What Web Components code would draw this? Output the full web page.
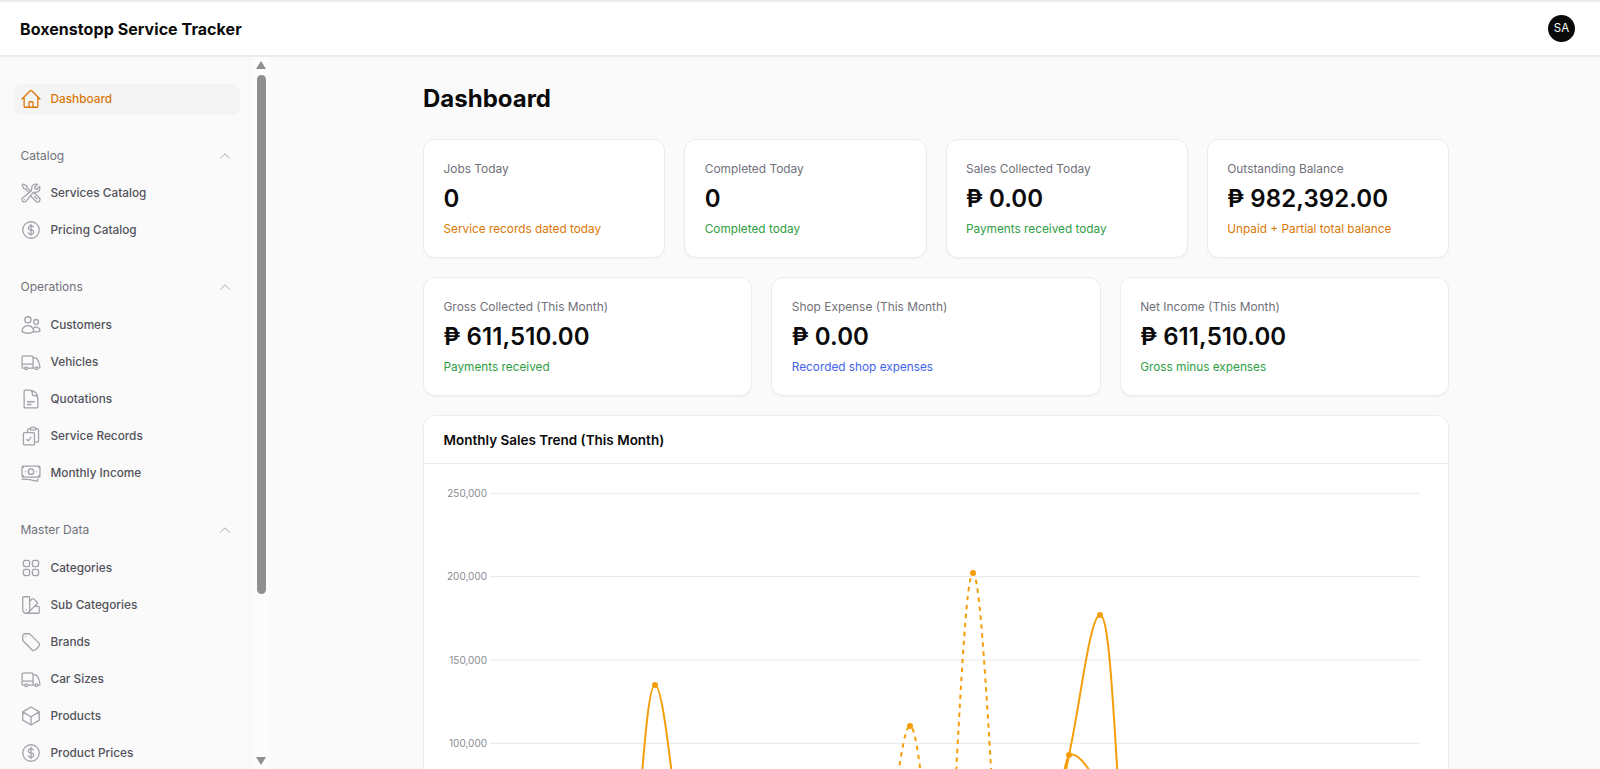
<!DOCTYPE html>
<html lang="en">
<head>
<meta charset="utf-8">
<title>Boxenstopp Service Tracker</title>
<style>
html,body{margin:0;height:100%;overflow:hidden;background:#fafafa;font-family:Inter,"Liberation Sans",sans-serif;}
</style>
</head>
<body>
<app-shell>
  <app-header slot="header" title="Boxenstopp Service Tracker" initials="SA"></app-header>
  <side-nav slot="side">
    <nav-item icon="home" active>Dashboard</nav-item>
    <nav-section label="Catalog">
      <nav-item icon="tools">Services Catalog</nav-item>
      <nav-item icon="dollar">Pricing Catalog</nav-item>
    </nav-section>
    <nav-section label="Operations">
      <nav-item icon="users">Customers</nav-item>
      <nav-item icon="truck">Vehicles</nav-item>
      <nav-item icon="doc">Quotations</nav-item>
      <nav-item icon="clip">Service Records</nav-item>
      <nav-item icon="bank">Monthly Income</nav-item>
    </nav-section>
    <nav-section label="Master Data">
      <nav-item icon="grid">Categories</nav-item>
      <nav-item icon="swatch">Sub Categories</nav-item>
      <nav-item icon="tag">Brands</nav-item>
      <nav-item icon="truck">Car Sizes</nav-item>
      <nav-item icon="cube">Products</nav-item>
      <nav-item icon="dollar">Product Prices</nav-item>
    </nav-section>
  </side-nav>
  <dash-page heading="Dashboard">
    <stat-row columns="4">
      <stat-card label="Jobs Today" value="0" note="Service records dated today" tone="orange"></stat-card>
      <stat-card label="Completed Today" value="0" note="Completed today" tone="green"></stat-card>
      <stat-card label="Sales Collected Today" value="₱ 0.00" note="Payments received today" tone="green"></stat-card>
      <stat-card label="Outstanding Balance" value="₱ 982,392.00" note="Unpaid + Partial total balance" tone="orange"></stat-card>
    </stat-row>
    <stat-row columns="3">
      <stat-card label="Gross Collected (This Month)" value="₱ 611,510.00" note="Payments received" tone="green"></stat-card>
      <stat-card label="Shop Expense (This Month)" value="₱ 0.00" note="Recorded shop expenses" tone="blue"></stat-card>
      <stat-card label="Net Income (This Month)" value="₱ 611,510.00" note="Gross minus expenses" tone="green"></stat-card>
    </stat-row>
    <chart-card heading="Monthly Sales Trend (This Month)"><trend-chart></trend-chart></chart-card>
  </dash-page>
</app-shell>
<script>
const ICONS={
home:'m2.25 12 8.954-8.955c.44-.439 1.152-.439 1.591 0L21.75 12M4.5 9.75v10.125c0 .621.504 1.125 1.125 1.125H9.75v-4.875c0-.621.504-1.125 1.125-1.125h2.25c.621 0 1.125.504 1.125 1.125V21h4.125c.621 0 1.125-.504 1.125-1.125V9.75M8.25 21h8.25',
tools:'M11.42 15.17 17.25 21A2.652 2.652 0 0 0 21 17.25l-5.877-5.877M11.42 15.17l2.496-3.03c.317-.384.74-.626 1.208-.766M11.42 15.17l-4.655 5.653a2.548 2.548 0 1 1-3.586-3.586l6.837-5.63m5.108-.233c.55-.164 1.163-.188 1.743-.14a4.5 4.5 0 0 0 4.486-6.336l-3.276 3.277a3.004 3.004 0 0 1-2.25-2.25l3.276-3.276a4.5 4.5 0 0 0-6.336 4.486c.091 1.076-.071 2.264-.904 2.95l-.102.085m-1.745 1.437L5.909 7.5H4.5L2.25 3.75l1.5-1.5L7.5 4.5v1.409l4.26 4.26m-1.745 1.437 1.745-1.437m6.615 8.206L15.75 15.75M4.867 19.125h.008v.008h-.008v-.008Z',
dollar:'M12 6v12m-3-2.818.879.659c1.171.879 3.07.879 4.242 0 1.172-.879 1.172-2.303 0-3.182C13.536 12.219 12.768 12 12 12c-.725 0-1.45-.22-2.003-.659-1.106-.879-1.106-2.303 0-3.182s2.9-.879 4.006 0l.415.33M21 12a9 9 0 1 1-18 0 9 9 0 0 1 18 0Z',
users:'M15 19.128a9.38 9.38 0 0 0 2.625.372 9.337 9.337 0 0 0 4.121-.952 4.125 4.125 0 0 0-7.533-2.493M15 19.128v-.003c0-1.113-.285-2.16-.786-3.07M15 19.128v.106A12.318 12.318 0 0 1 8.624 21c-2.331 0-4.512-.645-6.374-1.766l-.001-.109a6.375 6.375 0 0 1 11.964-3.07M12 6.375a3.375 3.375 0 1 1-6.75 0 3.375 3.375 0 0 1 6.75 0Zm8.25 2.25a2.625 2.625 0 1 1-5.25 0 2.625 2.625 0 0 1 5.25 0Z',
truck:'M8.25 18.75a1.5 1.5 0 0 1-3 0m3 0a1.5 1.5 0 0 0-3 0m3 0h6m-9 0H3.375a1.125 1.125 0 0 1-1.125-1.125V14.25m17.25 4.5a1.5 1.5 0 0 1-3 0m3 0a1.5 1.5 0 0 0-3 0m3 0h1.125c.621 0 1.129-.504 1.09-1.124a17.902 17.902 0 0 0-3.213-9.193 2.056 2.056 0 0 0-1.58-.86H14.25M16.5 18.75h-2.25m0-11.177v-.958c0-.568-.422-1.048-.987-1.106a48.554 48.554 0 0 0-10.026 0 1.106 1.106 0 0 0-.987 1.106v7.635m12-6.677v6.677m0 4.5v-4.5m0 0h-12',
doc:'M19.5 14.25v-2.625a3.375 3.375 0 0 0-3.375-3.375h-1.5A1.125 1.125 0 0 1 13.5 7.125v-1.5a3.375 3.375 0 0 0-3.375-3.375H8.25m0 12.75h7.5m-7.5 3H12M10.5 2.25H5.625c-.621 0-1.125.504-1.125 1.125v17.25c0 .621.504 1.125 1.125 1.125h12.75c.621 0 1.125-.504 1.125-1.125V11.25a9 9 0 0 0-9-9Z',
clip:'M11.35 3.836c-.065.21-.1.433-.1.664 0 .414.336.75.75.75h4.5a.75.75 0 0 0 .75-.75 2.25 2.25 0 0 0-.1-.664m-5.8 0A2.251 2.251 0 0 1 13.5 2.25H15c1.012 0 1.867.668 2.15 1.586m-5.8 0c-.376.023-.75.05-1.124.08C9.095 4.01 8.25 4.973 8.25 6.108V8.25m8.9-4.414c.376.023.75.05 1.124.08 1.131.094 1.976 1.057 1.976 2.192V16.5A2.25 2.25 0 0 1 18 18.75h-2.25m-7.5-10.5H4.875c-.621 0-1.125.504-1.125 1.125v11.25c0 .621.504 1.125 1.125 1.125h9.75c.621 0 1.125-.504 1.125-1.125V18.75m-7.5-10.5h6.375c.621 0 1.125.504 1.125 1.125v9.375m-8.25-3 1.5 1.5 3-3.75',
bank:'M2.25 18.75a60.07 60.07 0 0 1 15.797 2.101c.727.198 1.453-.342 1.453-1.096V18.75M3.75 4.5v.75A.75.75 0 0 1 3 6h-.75m0 0v-.375c0-.621.504-1.125 1.125-1.125H20.25M2.25 6v9m18-10.5v.75c0 .414.336.75.75.75h.75m-1.5-1.5h.375c.621 0 1.125.504 1.125 1.125v9.75c0 .621-.504 1.125-1.125 1.125h-.375m1.5-1.5H21a.75.75 0 0 0-.75.75v.75m0 0H3.75m0 0h-.375a1.125 1.125 0 0 1-1.125-1.125V15m1.5 1.5v-.75A.75.75 0 0 0 3 15h-.75M15 10.5a3 3 0 1 1-6 0 3 3 0 0 1 6 0Zm3 0h.008v.008H18V10.5Zm-12 0h.008v.008H6V10.5Z',
grid:'M3.75 6A2.25 2.25 0 0 1 6 3.75h2.25A2.25 2.25 0 0 1 10.5 6v2.25a2.25 2.25 0 0 1-2.25 2.25H6a2.25 2.25 0 0 1-2.25-2.25V6ZM3.75 15.75A2.25 2.25 0 0 1 6 13.5h2.25a2.25 2.25 0 0 1 2.25 2.25V18a2.25 2.25 0 0 1-2.25 2.25H6A2.25 2.25 0 0 1 3.75 18v-2.25ZM13.5 6a2.25 2.25 0 0 1 2.25-2.25H18A2.25 2.25 0 0 1 20.25 6v2.25A2.25 2.25 0 0 1 18 10.5h-2.25a2.25 2.25 0 0 1-2.25-2.25V6ZM13.5 15.75a2.25 2.25 0 0 1 2.25-2.25H18a2.25 2.25 0 0 1 2.25 2.25V18A2.25 2.25 0 0 1 18 20.25h-2.25A2.25 2.25 0 0 1 13.5 18v-2.25Z',
swatch:'M4.098 19.902a3.75 3.75 0 0 0 5.304 0l6.401-6.402M6.75 21A3.75 3.75 0 0 1 3 17.25V4.125C3 3.504 3.504 3 4.125 3h5.25c.621 0 1.125.504 1.125 1.125v4.072M6.75 21a3.75 3.75 0 0 0 3.75-3.75V8.197M6.75 21h13.125c.621 0 1.125-.504 1.125-1.125v-5.25c0-.621-.504-1.125-1.125-1.125h-4.072M10.5 8.197l2.88-2.88c.438-.439 1.15-.439 1.59 0l3.712 3.713c.44.44.44 1.152 0 1.59l-2.879 2.88M6.75 17.25h.008v.008H6.75v-.008Z',
tag:'M9.568 3H5.25A2.25 2.25 0 0 0 3 5.25v4.318c0 .597.237 1.17.659 1.591l9.581 9.581c.699.699 1.78.872 2.607.33a18.095 18.095 0 0 0 5.223-5.223c.542-.827.369-1.908-.33-2.607L11.16 3.66A2.25 2.25 0 0 0 9.568 3Z M6 6h.008v.008H6V6Z',
cube:'m21 7.5-9-5.25L3 7.5m18 0-9 5.25m9-5.25v9l-9 5.25M3 7.5l9 5.25M3 7.5v9l9 5.25m0-9v9',
chevron:'m4.5 15.75 7.5-7.5 7.5 7.5'
};
function svgIcon(name,size,sw){
  return `<svg width="${size}" height="${size}" viewBox="0 0 24 24" fill="none" stroke="currentColor" stroke-width="${sw}" stroke-linecap="round" stroke-linejoin="round" aria-hidden="true"><path d="${ICONS[name]}"/></svg>`;
}
function define(name,render){
  customElements.define(name,class extends HTMLElement{
    constructor(){super();this.attachShadow({mode:'open'});}
    connectedCallback(){this.shadowRoot.innerHTML=render(this);}
  });
}
define('app-shell',()=>`<style>
:host{display:grid;grid-template-columns:272px 1fr;grid-template-rows:57px 1fr;height:100vh;overflow:hidden;}
.h{grid-column:1/-1;display:block;min-width:0}
.s{min-height:0;overflow:hidden}
.m{min-height:0;min-width:0;overflow:hidden}
</style>
<div class="h"><slot name="header"></slot></div>
<div class="s"><slot name="side"></slot></div>
<div class="m"><slot></slot></div>`);
define('app-header',h=>`<style>
:host{display:flex;align-items:center;justify-content:space-between;height:57px;box-sizing:border-box;background:#fff;border-top:2px solid #ececec;border-bottom:2px solid #ececec;padding:0 25px 0 20px;}
.t{font:700 16px/24px Inter,sans-serif;color:#0a0a0a;letter-spacing:.06px}
.a{width:27px;height:27px;border-radius:50%;background:#0a0a0a;color:#fff;font:400 11.5px/27px Inter,sans-serif;text-align:center}
</style><span class="t">${h.getAttribute('title')}</span><span class="a">${h.getAttribute('initials')}</span>`);
define('side-nav',()=>`<style>
:host{display:flex;height:100%;background:#fafafa;padding-right:3px;box-sizing:border-box;overflow:hidden}
nav{width:253px;flex:none;box-sizing:border-box;padding:27px 13px 0 14px;overflow:hidden;display:flex;flex-direction:column;gap:24px}
.rail{width:16px;flex:none;background:#fcfcfc;display:flex;flex-direction:column;align-items:center}
.up,.down{width:0;height:0;border-left:5.5px solid transparent;border-right:5.5px solid transparent;flex:none}
.up{border-bottom:8px solid #8f8f8f;margin-top:3.5px}
.thumb{width:9px;height:519px;background:#8f8f8f;border-radius:5px;margin-top:6.5px;flex:none}
.down{border-top:8px solid #8f8f8f;margin-top:163px}
</style><nav><slot></slot></nav><div class="rail"><i class="up"></i><i class="thumb"></i><i class="down"></i></div>`);
define('nav-section',s=>`<style>
:host{display:flex;flex-direction:column;gap:4px}
.l{display:flex;align-items:center;justify-content:space-between;height:33.8px;padding:0 8.5px 0 6.5px;font:400 12px/16px Inter,sans-serif;color:#71717a}
.l svg{color:#a1a1aa;display:block}
</style><div class="l"><span>${s.getAttribute('label')}</span>${svgIcon('chevron',14,1.6)}</div><slot></slot>`);
define('nav-item',i=>`<style>
:host{display:flex;align-items:center;gap:9px;height:33px;box-sizing:border-box;padding:0 6px 0 5.5px;border-radius:8px;font:500 11.8px/20px Inter,sans-serif;color:#52525b;background:${i.hasAttribute('active')?'#f4f4f5':'transparent'}}
svg{flex:none;display:block;color:${i.hasAttribute('active')?'#d97706':'#a1a1aa'}}
span{color:${i.hasAttribute('active')?'#d97706':'inherit'}}
</style>${svgIcon(i.getAttribute('icon'),22,1.4)}<span><slot></slot></span>`);
define('dash-page',p=>`<style>
:host{display:block;height:100%;overflow:hidden;background:#fafafa}
.w{max-width:1026px;margin:0 auto;padding-top:26px;display:flex;flex-direction:column;gap:19px}
h1{margin:0 0 5px;font:700 24px/32px Inter,sans-serif;color:#0a0a0a}
</style><div class="w"><h1>${p.getAttribute('heading')}</h1><slot></slot></div>`);
define('stat-row',r=>`<style>
:host{display:grid;grid-template-columns:repeat(${r.getAttribute('columns')},minmax(0,1fr));gap:19px}
</style><slot></slot>`);
const TONES={orange:'#d97706',green:'#2f9e44',blue:'#4263eb'};
define('stat-card',c=>`<style>
:host{display:block;box-sizing:border-box;height:119px;background:#fff;border:1px solid #ececec;border-radius:12px;box-shadow:0 1px 2px rgba(0,0,0,.04);padding:20px 19.5px}
.l{font:400 11.9px/16px Inter,sans-serif;color:#71717a;margin-top:1px}
.v{font:600 24px/32px Inter,sans-serif;color:#0a0a0a;margin-top:6px;letter-spacing:.1px}
.n{font:400 11.8px/16px Inter,sans-serif;margin-top:6px;color:${TONES[c.getAttribute('tone')]}}
</style><div class="l">${c.getAttribute('label')}</div><div class="v">${c.getAttribute('value')}</div><div class="n">${c.getAttribute('note')}</div>`);
define('chart-card',c=>`<style>
:host{display:block;box-sizing:border-box;background:#fff;border:1px solid #ececec;border-radius:12px;box-shadow:0 1px 2px rgba(0,0,0,.04)}
.h{height:48px;box-sizing:border-box;border-bottom:1px solid #ececec;padding:0 19.5px;font:600 13.5px/48px Inter,sans-serif;color:#0a0a0a}
</style><div class="h">${c.getAttribute('heading')}</div><slot></slot>`);
define('trend-chart',()=>{
  const ys=[[493.3,'250,000'],[576.6,'200,000'],[660,'150,000'],[743.3,'100,000']];
  const grid=ys.map(([y,t])=>`<line x1="490" x2="1419" y1="${y}" y2="${y}" stroke="#e8e8e8"/><text x="487" y="${y+3.6}" text-anchor="end">${t}</text>`).join('');
  return `<style>:host{display:block}svg{display:block}text{font:400 10px Inter,sans-serif;fill:#8a8a93}</style>
<svg width="1024" height="330" viewBox="424 464 1024 330">${grid}
<g fill="none" stroke="#f59e0b" stroke-width="2" stroke-linecap="butt">
<path d="M637 835C645 735 649 685 655 685C661 685 667 730 679 835"/>
<path stroke-dasharray="4.5 4.5" d="M893 810C902 745 906 726 910 726C914 726 918 745 925 810"/>
<path stroke-dasharray="4.5 4.5" d="M951 870C960 700 966 573 973 573C980 573 987 700 997 870"/>
<path d="M1058 810C1062 790 1066 770 1069 755C1080 705 1090 615 1100 615C1108 615 1112 680 1119 800"/>
<path d="M1060 790C1063 775 1066 760 1069 755C1077 752 1084 762 1100 785"/>
</g>
<g fill="#f59e0b"><circle cx="655" cy="685" r="3"/><circle cx="910" cy="726" r="3"/><circle cx="973" cy="573" r="3"/><circle cx="1100" cy="615" r="3"/><circle cx="1069" cy="755" r="3"/></g>
</svg>`;
});
</script>
</body>
</html>
